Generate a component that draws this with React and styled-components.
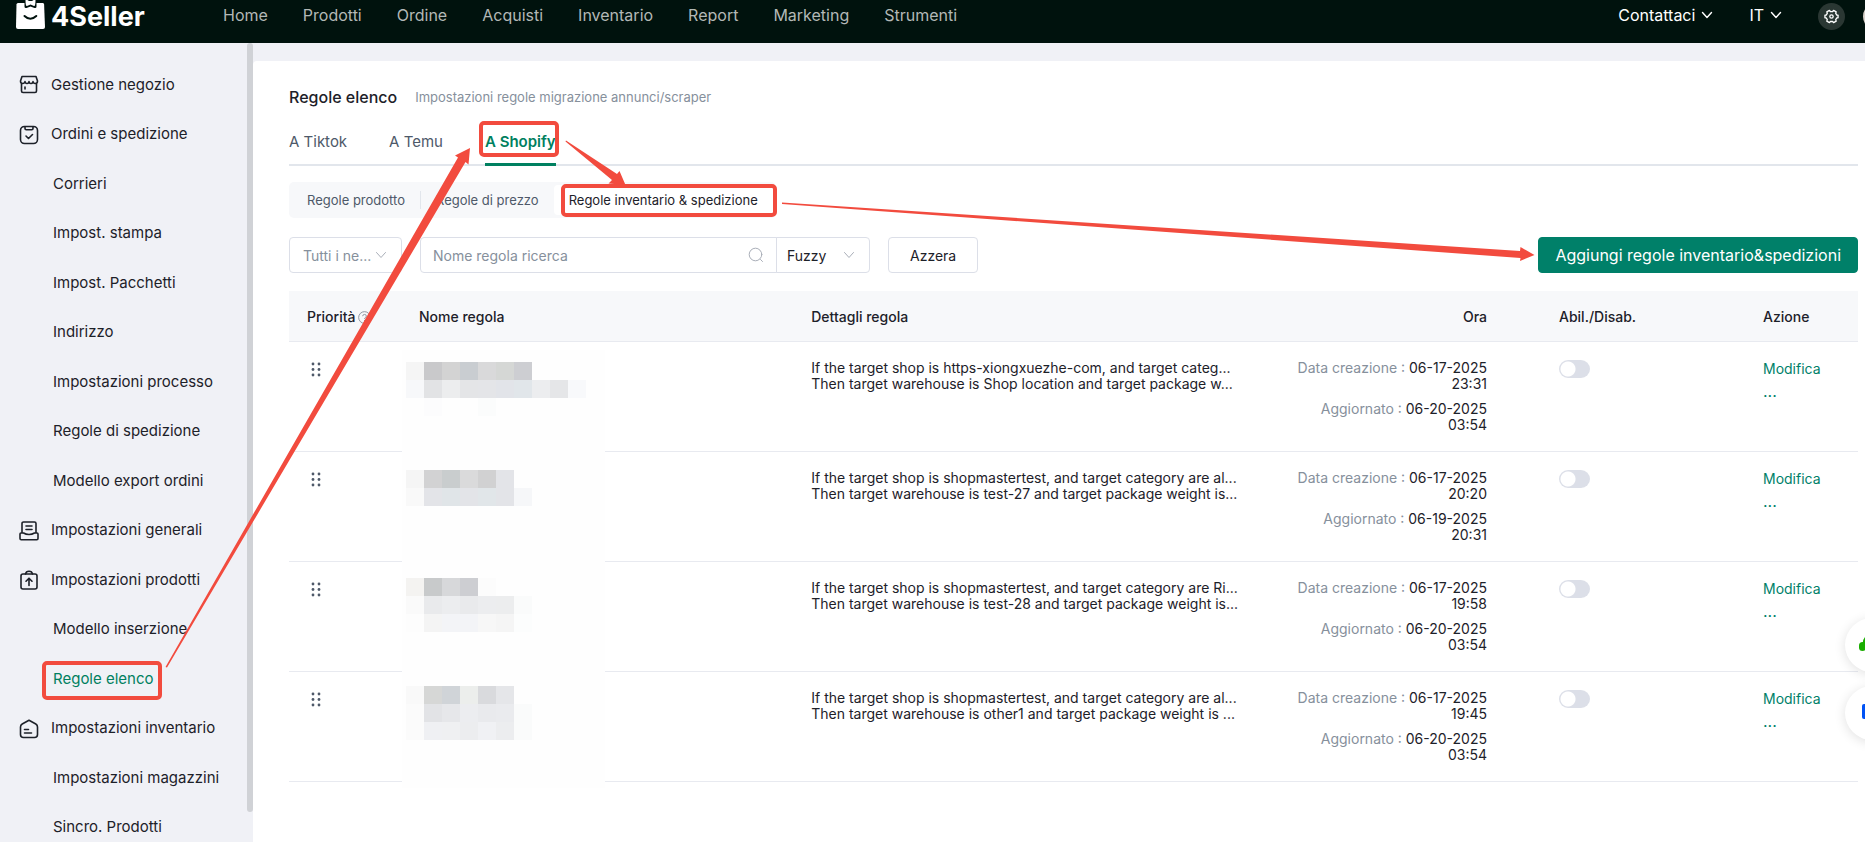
import React from "react";
import styled, { createGlobalStyle, css } from "styled-components";

const Global = createGlobalStyle`
  *, *::before, *::after { box-sizing: border-box; }
  body { margin: 0; font-family: Inter, "Liberation Sans", sans-serif; font-size: 14px; color: #1d2129; background: #fff; overflow: hidden; }
  button, input, select { font: inherit; }
  a { text-decoration: none; color: inherit; }
  ul { list-style: none; margin: 0; padding: 0; }
`;

const Page = styled.div`
  position: relative;
  display: flex;
  flex-direction: column;
  height: 100vh;
  overflow: hidden;
`;

const Header = styled.header`
  display: flex;
  flex: none;
  align-items: flex-start;
  height: 43px;
  padding: 0 0 0 16px;
  background: #00120d;
  color: #fff;
  overflow: hidden;
`;

const Brand = styled.a`
  display: flex;
  flex: none;
  width: 207px;
`;

const MainNav = styled.nav`
  display: flex;
  flex: 1;
  gap: 35px;
  font-size: 16px;
  line-height: 30px;
  color: #b3b8b6;
`;

const HeaderTools = styled.div`
  display: flex;
  flex: none;
  align-items: center;
  height: 32px;
  font-size: 16px;
`;

const HeaderMenu = styled.button`
  display: flex;
  align-items: center;
  gap: 6px;
  margin-right: 36px;
  padding: 0 0 2px;
  border: 0;
  background: none;
  color: #fff;
`;

const RoundButton = styled.button`
  display: grid;
  place-items: center;
  flex: none;
  width: 27px;
  height: 27px;
  padding: 0;
  border: 0;
  border-radius: 50%;
  background: #2a3733;
  color: #fff;
`;

const Avatar = styled.button`
  flex: none;
  width: 27px;
  height: 27px;
  margin: 0 -25px 0 18px;
  padding: 0;
  border: 0;
  border-radius: 50%;
  background: #d9d2cb;
`;

const Body = styled.div`
  display: flex;
  flex: 1;
  min-height: 0;
  background: #f0f1f6;
`;

const Sidebar = styled.aside`
  display: flex;
  flex: none;
  width: 253px;
`;

const SideList = styled.ul`
  display: grid;
  grid-auto-rows: 50px 49px;
  flex: 1;
  align-content: start;
  padding-top: 16px;
  overflow: hidden;
`;

const SideLink = styled.a`
  display: flex;
  align-items: center;
  gap: 12px;
  height: 100%;
  padding-left: ${(p) => (p.$sub ? "53px" : "19px")};
  font-size: 15px;
  color: ${(p) => (p.$active ? "#008060" : "#1d2129")};
  svg { flex: none; margin-top: 2px; }
`;

const ScrollThumb = styled.div`
  flex: none;
  width: 6px;
  margin-bottom: 30px;
  border-radius: 3px;
  background: #d0d2d6;
`;

const Panel = styled.main`
  flex: 1;
  min-width: 0;
  margin-top: 18px;
  padding: 23px 7px 0 36px;
  border-radius: 4px 0 0 0;
  background: #fff;
`;

const TitleRow = styled.div`
  display: flex;
  align-items: center;
  gap: 18px;
  height: 26px;
`;

const Title = styled.h1`
  margin: 0;
  font-size: 16px;
  font-weight: 500;
`;

const Subtitle = styled.span`
  font-size: 13px;
  color: #86909c;
`;

const Tabs = styled.nav`
  display: flex;
  gap: 42px;
  height: 56px;
  border-bottom: 2px solid #e2e6ec;
`;

const Tab = styled.a`
  display: flex;
  align-items: center;
  height: 56px;
  padding-top: 15px;
  padding-bottom: 8px;
  font-size: 15px;
  color: #4e5969;
  ${(p) => p.$active && css`
    padding-bottom: 5px;
    color: #008060;
    font-weight: 600;
    border-bottom: 3px solid #008060;
  `}
`;

const Segments = styled.div`
  display: flex;
  align-items: center;
  width: fit-content;
  height: 36px;
  margin-top: 16px;
  padding: 3px;
  border-radius: 5px;
  background: #f7f8fa;
`;

const Segment = styled.button`
  height: 30px;
  padding: 0 15px;
  border: 0;
  border-radius: 4px;
  background: ${(p) => (p.$active ? "#fff" : "none")};
  color: ${(p) => (p.$active ? "#1d2129" : "#4e5969")};
  font-size: 13px;
`;

const SegmentRule = styled.span`
  width: 1px;
  height: 18px;
  background: #e2e6ec;
`;

const Filters = styled.form`
  display: flex;
  align-items: center;
  gap: 18px;
  margin-top: 19px;
`;

const SelectBox = styled.span`
  display: flex;
  align-items: center;
  width: ${(p) => p.$width};
  height: 36px;
  padding-right: 14px;
  border: 1px solid #dcdfe8;
  border-radius: ${(p) => (p.$joined ? "0 4px 4px 0" : "4px")};
  margin-left: ${(p) => (p.$joined ? "-1px" : "0")};
  color: #a9aeb8;
  svg { flex: none; }
`;

const Select = styled.select`
  flex: 1;
  min-width: 0;
  height: 100%;
  padding: 0 0 0 ${(p) => (p.$dark ? "10px" : "13px")};
  border: 0;
  background: none;
  appearance: none;
  color: ${(p) => (p.$dark ? "#1d2129" : "#86909c")};
  font-size: 14px;
`;

const SearchGroup = styled.div`
  display: flex;
`;

const SearchBox = styled.span`
  display: flex;
  align-items: center;
  width: 357px;
  height: 36px;
  padding-right: 12px;
  border: 1px solid #dcdfe8;
  border-radius: 4px 0 0 4px;
  color: #a9aeb8;
`;

const SearchInput = styled.input`
  flex: 1;
  min-width: 0;
  height: 100%;
  padding: 0 0 0 12px;
  border: 0;
  outline: 0;
  background: none;
  font-size: 14px;
  &::placeholder { color: #86909c; opacity: 1; }
`;

const Button = styled.button`
  height: 36px;
  padding: 0 ${(p) => (p.$primary ? "16px" : "21px")};
  border: 1px solid ${(p) => (p.$primary ? "#008069" : "#dcdfe8")};
  border-radius: 4px;
  margin-left: ${(p) => (p.$primary ? "auto" : "0")};
  background: ${(p) => (p.$primary ? "#008069" : "#fff")};
  color: ${(p) => (p.$primary ? "#fff" : "#1d2129")};
  font-size: ${(p) => (p.$primary ? "16px" : "14px")};
`;

const TableArea = styled.div`
  position: relative;
  margin-top: 18px;
`;

const Table = styled.table`
  width: 100%;
  table-layout: fixed;
  border-collapse: separate;
  border-spacing: 0;
`;

const Col = styled.col`
  width: ${(p) => p.$width};
`;

const cell = css`
  padding-left: ${(p) => (p.$end ? "0" : "18px")};
  padding-right: ${(p) => (p.$end ? "54px" : "0")};
  border-bottom: 1px solid #e8eaf0;
  font-size: 14px;
  text-align: ${(p) => (p.$end ? "right" : "left")};
  white-space: nowrap;
`;

const Th = styled.th`
  ${cell}
  height: 51px;
  padding-top: 0;
  padding-bottom: 0;
  background: #f7f8fa;
  font-weight: 500;
  svg { margin-left: 3px; vertical-align: -2px; color: #86909c; }
`;

const Td = styled.td`
  ${cell}
  height: 110px;
  padding-top: 18px;
  padding-bottom: 0;
  line-height: 16px;
  vertical-align: top;
`;

const DragHandle = styled.button`
  display: block;
  margin: 2px 0 0 4px;
  padding: 0;
  border: 0;
  background: none;
  color: #4e5969;
  svg { display: block; }
`;

const Stamp = styled.div`
  & + & { margin-top: 9px; }
  span { color: #86909c; }
`;

const Switch = styled.input`
  display: block;
  appearance: none;
  width: 31px;
  height: 18px;
  margin: 0;
  border-radius: 9px;
  background: radial-gradient(circle at 9px 9px, #fff 7px, #dcdfe8 8px);
`;

const Action = styled.a`
  display: block;
  line-height: 18px;
  color: #008069;
  & + & { margin-top: 4px; font-size: 16px; }
`;

const Mosaic = styled.svg`
  position: absolute;
  left: 113px;
  top: 59px;
`;

const Annotations = styled.svg`
  position: absolute;
  left: 0;
  top: 0;
  pointer-events: none;
`;

const Floating = styled.div`
  position: absolute;
  right: -34px;
  top: 618px;
  display: flex;
  flex-direction: column;
  gap: 14px;
`;

const FloatButton = styled.button`
  display: flex;
  align-items: center;
  width: 54px;
  height: 54px;
  padding: 0 0 0 14px;
  border: 0;
  border-radius: 50%;
  background: #fff;
  box-shadow: 0 2px 12px rgba(0, 0, 0, 0.12);
`;

const Chevron = ({ size = 12, width = 1 }) => (
  <svg width={size} height={size} viewBox="0 0 12 12" fill="none" stroke="currentColor" strokeWidth={width} strokeLinecap="round" strokeLinejoin="round">
    <path d="M1.500 3.500 6 8.500l4.500-5" />
  </svg>
);

const Logo = () => (
  <svg width="136" height="32" viewBox="0 0 136 32" role="img" aria-label="4Seller">
    <path d="M2 3h25q1 0 1.100 1.500L29 27q0 2-2 2H2q-2 0-2-2L.5 4.500Q.6 3 2 3Z" fill="#fff" />
    <path d="M8.500 2.500v4q0 2 2 1.500l4-1.500 4 1.500q2 .5 2-1.500v-4Z" fill="#00120d" />
    <path d="M9.500 0q0 6.500 1.500 6l3.500-1.600L18 6q1.500.5 1.500-6-2-.5-3.500 1h-3Q11.500-.5 9.500 0Z" fill="#fff" />
    <path d="M8.500 16q5.800 5.500 11.800 0" fill="none" stroke="#00120d" strokeWidth="2" strokeLinecap="round" />
    <text x="35" y="26" fill="#fff" fontFamily="Inter" fontWeight="700" fontSize="27">4Seller</text>
  </svg>
);

const iconShapes = {
  shop: (
    <path d="M2.500 8.500V16a1.500 1.500 0 0 0 1.500 1.500h12a1.500 1.500 0 0 0 1.500-1.500V8.500M3 1.500h14l1.500 4.500q0 2.500-2.200 2.500T14 6.500q-.3 2-2.100 2T10 6.500q-.2 2-2 2T6 6.500q-.3 2-2.400 2T1.500 6L3 1.500ZM6 12v2" />
  ),
  order: (
    <>
      <rect x="1.500" y="1.500" width="17" height="17" rx="4" />
      <path d="M6 2v1.500q0 1.200 1.200 1.200h5.600q1.200 0 1.200-1.200V2M7 11l2.500 2.500 4-4" />
    </>
  ),
  general: (
    <path d="M3 12V2.500A1.500 1.500 0 0 1 4.500 1h11A1.500 1.500 0 0 1 17 2.500V12M7 5h6M7 8.500h6M1 13q0-1 1-1h2.500q2.500 1.500 5.500 1.500t5.500-1.500H18q1 0 1 1v4.500q0 1.200-1.200 1.200H2.200Q1 18.700 1 17.500Z" />
  ),
  product: (
    <>
      <rect x="2" y="4" width="16" height="15" rx="2" />
      <path d="M6.500 4q.5-2.800 3.500-2.800T13.500 4M10 15.500V8.500M7 11.200l3-3 3 3" />
    </>
  ),
  stock: (
    <path d="M10 1.300 16.800 5Q18.500 6 18.500 8v7.500q0 3-3 3h-11q-3 0-3-3V8q0-2 1.700-3ZM5.500 10.500h4M5.500 14h7" />
  ),
};

const SideIcon = ({ name }) => (
  <svg width="20" height="20" viewBox="0 0 20 20" fill="none" stroke="currentColor" strokeWidth="1.600" strokeLinecap="round" strokeLinejoin="round" aria-hidden="true">
    {iconShapes[name]}
  </svg>
);

const Gear = () => (
  <svg width="15" height="15" viewBox="0 0 16 16" fill="none" stroke="currentColor" strokeWidth="1.400" strokeLinejoin="round">
    <path d="m5.800 1.500 1 1.200h2.400l1-1.200 2.800 1.600-.5 1.500 1.200 2H15v2.800h-1.300l-1.200 2 .5 1.500-2.800 1.600-1-1.200H6.800l-1 1.200L3 12.900l.5-1.500-1.200-2H1V6.600h1.300l1.200-2L3 3.100Z" />
    <circle cx="8" cy="8" r="1.800" />
  </svg>
);

const Help = () => (
  <svg width="13" height="13" viewBox="0 0 14 14" fill="none" stroke="currentColor" strokeWidth="1">
    <circle cx="7" cy="7" r="6.300" />
    <path d="M5 5.600Q5.100 3.700 7 3.700t2 1.700Q9 6.500 7.900 7.100 7 7.600 7 8.600M7 9.700v1.100" />
  </svg>
);

const Magnifier = () => (
  <svg width="16" height="16" viewBox="0 0 16 16" fill="none" stroke="currentColor" strokeLinecap="round">
    <circle cx="7.500" cy="7.500" r="6.300" />
    <path d="m12.500 12.500 2 2" />
  </svg>
);

const Dots = () => (
  <svg width="10" height="15" viewBox="0 0 10 15" fill="currentColor">
    {[2, 7.5, 13].map((y) => (
      <React.Fragment key={y}>
        <circle cx="2" cy={y} r="1.400" />
        <circle cx="8" cy={y} r="1.400" />
      </React.Fragment>
    ))}
  </svg>
);

const mainNav = ["Home", "Prodotti", "Ordine", "Acquisti", "Inventario", "Report", "Marketing", "Strumenti"];

const sideItems = [
  { label: "Gestione negozio", icon: "shop" },
  { label: "Ordini e spedizione", icon: "order" },
  { label: "Corrieri" },
  { label: "Impost. stampa" },
  { label: "Impost. Pacchetti" },
  { label: "Indirizzo" },
  { label: "Impostazioni processo" },
  { label: "Regole di spedizione" },
  { label: "Modello export ordini" },
  { label: "Impostazioni generali", icon: "general" },
  { label: "Impostazioni prodotti", icon: "product" },
  { label: "Modello inserzione" },
  { label: "Regole elenco", active: true },
  { label: "Impostazioni inventario", icon: "stock" },
  { label: "Impostazioni magazzini" },
  { label: "Sincro. Prodotti" },
];

const rules = [
  {
    lines: ["If the target shop is https-xiongxuezhe-com, and target categ...", "Then target warehouse is Shop location and target package w..."],
    created: ["06-17-2025", "23:31"],
    updated: ["06-20-2025", "03:54"],
  },
  {
    lines: ["If the target shop is shopmastertest, and target category are al...", "Then target warehouse is test-27 and target package weight is..."],
    created: ["06-17-2025", "20:20"],
    updated: ["06-19-2025", "20:31"],
  },
  {
    lines: ["If the target shop is shopmastertest, and target category are Ri...", "Then target warehouse is test-28 and target package weight is..."],
    created: ["06-17-2025", "19:58"],
    updated: ["06-20-2025", "03:54"],
  },
  {
    lines: ["If the target shop is shopmastertest, and target category are al...", "Then target warehouse is other1 and target package weight is ..."],
    created: ["06-17-2025", "19:45"],
    updated: ["06-20-2025", "03:54"],
  },
];

/* Each line of tiles: its row on the 18px tile raster, then one colour per tile. */
const tiles = [
  [0, "f5f5f5 c9c9cb d3d3d3 c9cdd1 d9d9da d5d7d5 cdced2"],
  [1, "f7f8fa e2e3e5 ecedee e4e5e7 e4e5e8 e2e4e9 e1e6ea ecedef e5e6e8 f8f9fb"],
  [2, "fefefe fcfcfd fefefe fefefe fbfcfc"],
  [6, "f5f5f5 d2d2d3 c9cdce dadadb d1d1d2 e3e4e8"],
  [7, "f9f9f9 e3e4e8 e0e5e8 e3e4e8 e1e6e9 e3e4e8 f6f7f9"],
  [12, "f4f3f1 c8cacb d7d8da cdced2 fcfcfc"],
  [13, "fafafa e9eaec ecedef e9eaec ecedef ecedee fafbfb"],
  [14, "fdfdfd f4f4f4 f3f4f7 f3f4f7 f7f7f7 f5f5f5 fcfdfd"],
  [18, "f9f9f9 d6d7d6 d0d4d8 eceeec d9dadd e5e6e9"],
  [19, "fbfbfb e2e3e6 e6e7ea ecedf0 e9eaed eaebee fafbfb"],
  [20, "fbfbfb eff0f3 eff0f2 ecedef f0f1f4 ecedef fafbfb"],
];

const NameMosaic = () => (
  <Mosaic width="203" height="438" viewBox="0 0 203 438" shapeRendering="crispEdges" aria-hidden="true">
    <rect width="203" height="438" fill="#fefefe" />
    {tiles.map(([row, colours]) =>
      colours.split(" ").map((c, i) => (
        <rect key={`${row}-${i}`} x={4 + i * 18} y={12 + row * 18} width="18" height="18" fill={`#${c}`} />
      ))
    )}
  </Mosaic>
);

const Marks = () => (
  <Annotations width="100%" height="842" aria-hidden="true">
    <g fill="none" stroke="#f24b3e" strokeWidth="4">
      <rect x="44" y="663" width="116" height="35" rx="3" />
      <rect x="481" y="123" width="76" height="32" rx="3" />
      <rect x="563" y="186" width="212" height="29" rx="3" />
    </g>
    <g fill="#f24b3e">
      <path d="M165.500 667 458 157.500 455 155.500l15-7.500-1.500 16.500-3-2.500L167 667.500Z" />
      <path d="M566 140.500 617 174l2.500-3 6 14-17-1.500 3.500-3.500L565.500 141.500Z" />
      <path d="M782 202.500 1520 251l.5-4 14 8-14.500 6 .5-3L782 204Z" />
    </g>
  </Annotations>
);

export default function App() {
  return (
    <Page>
      <Global />
      <Header>
        <Brand href="#"><Logo /></Brand>
        <MainNav>
          {mainNav.map((label) => <a href="#" key={label}>{label}</a>)}
        </MainNav>
        <HeaderTools>
          <HeaderMenu>Contattaci <Chevron width={1.4} /></HeaderMenu>
          <HeaderMenu>IT <Chevron width={1.4} /></HeaderMenu>
          <RoundButton aria-label="Impostazioni"><Gear /></RoundButton>
          <Avatar aria-label="Profilo" />
        </HeaderTools>
      </Header>
      <Body>
        <Sidebar>
          <SideList>
            {sideItems.map(({ label, icon, active }) => (
              <li key={label}>
                <SideLink href="#" $sub={!icon} $active={active}>
                  {icon && <SideIcon name={icon} />}
                  {label}
                </SideLink>
              </li>
            ))}
          </SideList>
          <ScrollThumb />
        </Sidebar>
        <Panel>
          <TitleRow>
            <Title>Regole elenco</Title>
            <Subtitle>Impostazioni regole migrazione annunci/scraper</Subtitle>
          </TitleRow>
          <Tabs>
            <Tab href="#">A Tiktok</Tab>
            <Tab href="#">A Temu</Tab>
            <Tab href="#" $active>A Shopify</Tab>
          </Tabs>
          <Segments>
            <Segment>Regole prodotto</Segment>
            <SegmentRule />
            <Segment>Regole di prezzo</Segment>
            <Segment $active>Regole inventario &amp; spedizione</Segment>
          </Segments>
          <Filters onSubmit={(e) => e.preventDefault()}>
            <SelectBox $width="113px">
              <Select aria-label="Negozio"><option>Tutti i ne...</option></Select>
              <Chevron />
            </SelectBox>
            <SearchGroup>
              <SearchBox>
                <SearchInput aria-label="Nome regola ricerca" placeholder="Nome regola ricerca" />
                <Magnifier />
              </SearchBox>
              <SelectBox $width="94px" $joined>
                <Select $dark aria-label="Tipo di ricerca"><option>Fuzzy</option></Select>
                <Chevron />
              </SelectBox>
            </SearchGroup>
            <Button type="button">Azzera</Button>
            <Button type="button" $primary>Aggiungi regole inventario&amp;spedizioni</Button>
          </Filters>
          <TableArea>
            <Table>
              <colgroup>
                <Col $width="112px" />
                <Col $width="25%" />
                <Col />
                <Col $width="254px" />
                <Col $width="204px" />
                <Col $width="113px" />
              </colgroup>
              <thead>
                <tr>
                  <Th>Priorità<Help /></Th>
                  <Th>Nome regola</Th>
                  <Th>Dettagli regola</Th>
                  <Th $end>Ora</Th>
                  <Th>Abil./Disab.</Th>
                  <Th>Azione</Th>
                </tr>
              </thead>
              <tbody>
                {rules.map((r, i) => (
                  <tr key={i}>
                    <Td><DragHandle aria-label="Sposta"><Dots /></DragHandle></Td>
                    <Td />
                    <Td>{r.lines[0]}<br />{r.lines[1]}</Td>
                    <Td $end>
                      <Stamp><span>Data creazione : </span>{r.created[0]}<br />{r.created[1]}</Stamp>
                      <Stamp><span>Aggiornato : </span>{r.updated[0]}<br />{r.updated[1]}</Stamp>
                    </Td>
                    <Td><Switch type="checkbox" aria-label="Abilita regola" /></Td>
                    <Td>
                      <Action href="#">Modifica</Action>
                      <Action href="#">...</Action>
                    </Td>
                  </tr>
                ))}
              </tbody>
            </Table>
            <NameMosaic />
          </TableArea>
        </Panel>
      </Body>
      <Floating>
        <FloatButton aria-label="Assistenza">
          <svg width="26" height="26" viewBox="0 0 26 26" fill="none">
            <path d="M5 14V11a8 8 0 0 1 16 0v3" stroke="#1aad00" strokeWidth="2.500" />
            <rect x="0" y="10" width="7" height="9" rx="3.500" fill="#1aad00" />
            <rect x="19" y="10" width="7" height="9" rx="3.500" fill="#1aad00" />
          </svg>
        </FloatButton>
        <FloatButton aria-label="Messaggi">
          <svg width="26" height="26" viewBox="0 0 26 26">
            <rect x="3" y="4" width="20" height="15" rx="2" fill="#0052f5" />
          </svg>
        </FloatButton>
      </Floating>
      <Marks />
    </Page>
  );
}
